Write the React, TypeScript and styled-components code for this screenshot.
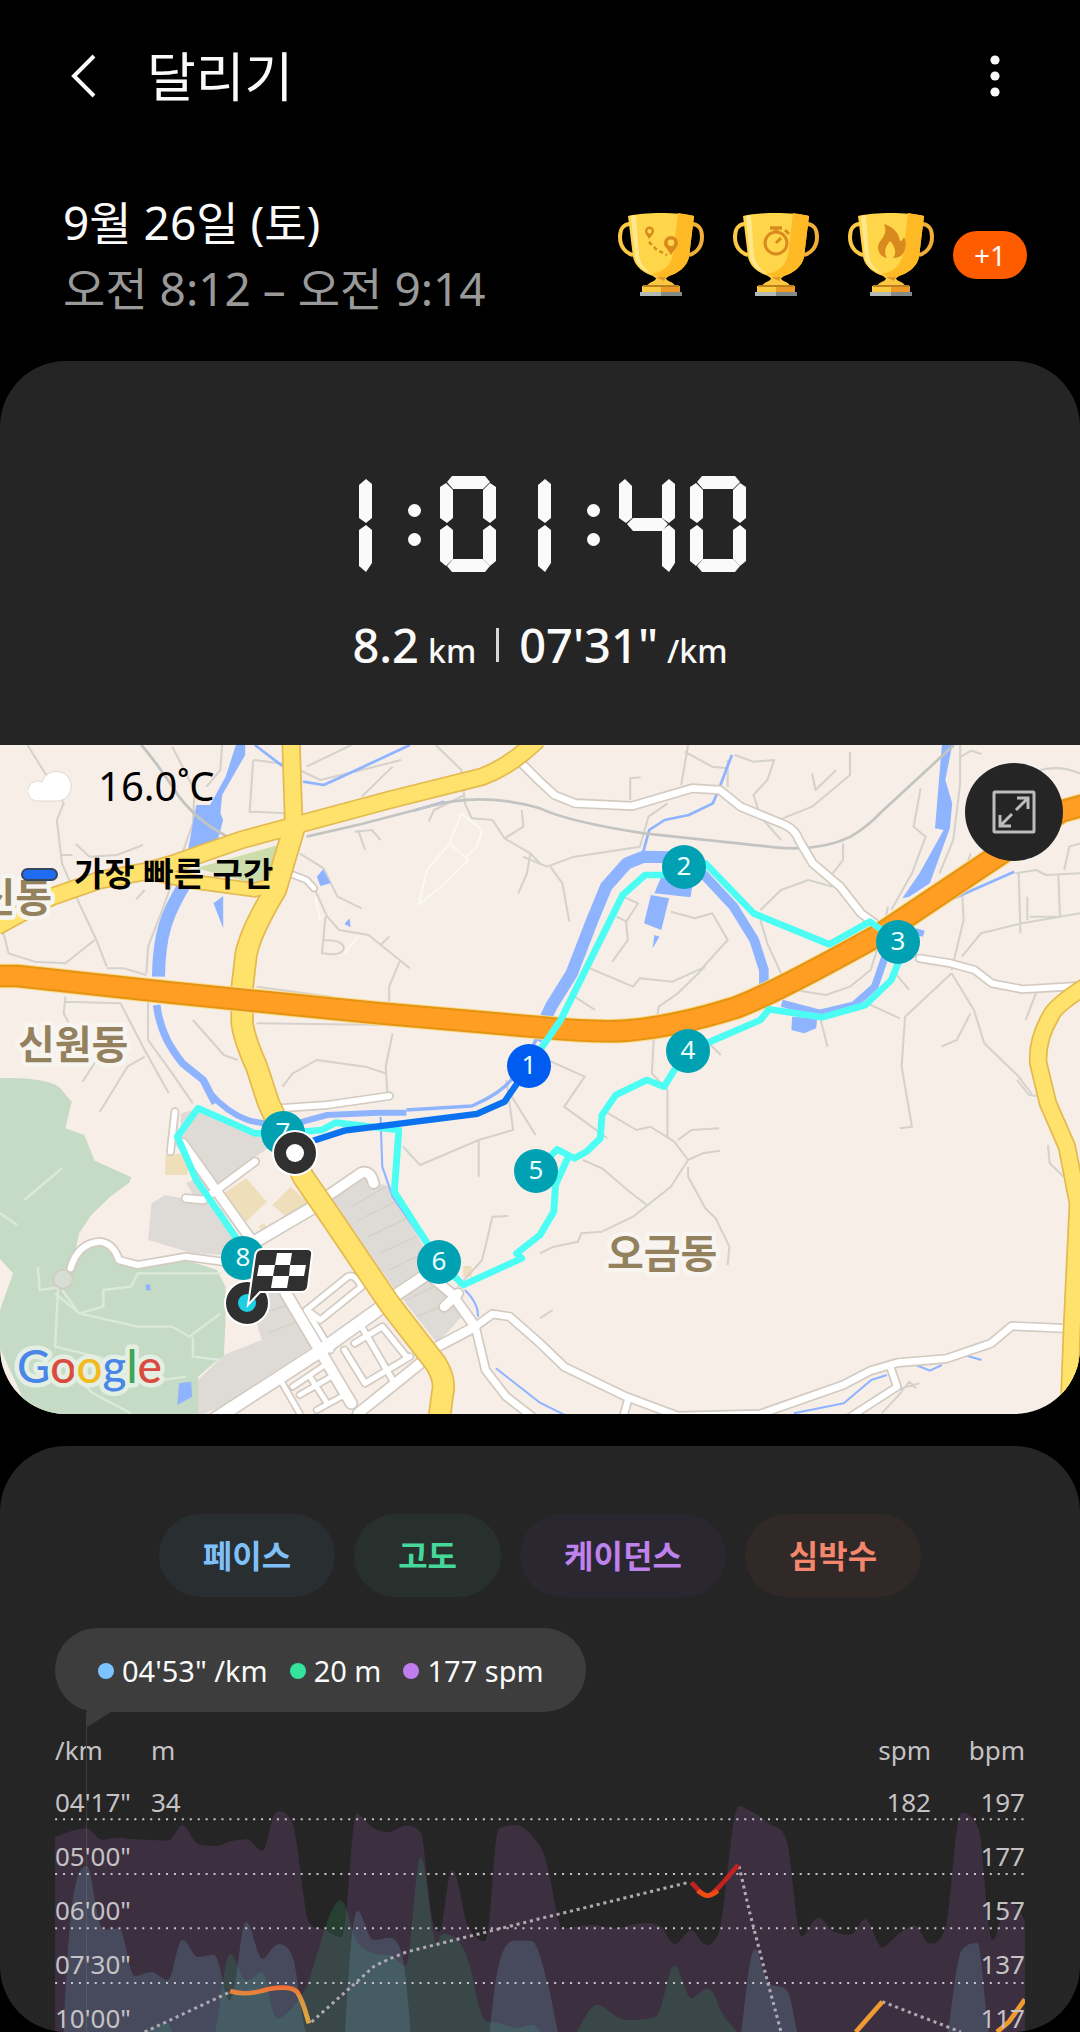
import React from "react";
import styled, { createGlobalStyle, css } from "styled-components";

const GlobalStyle = createGlobalStyle`
  *, *::before, *::after { box-sizing: border-box; }
  body {
    margin: 0;
    background: #000;
    color: #fafafa;
    font-family: "Noto Sans", "Noto Sans CJK KR", sans-serif;
  }
  button { font: inherit; color: inherit; border: 0; padding: 0; background: none; cursor: pointer; }
  h1, p { margin: 0; font-weight: 400; }
  svg { display: block; }
`;

/* ---------- header ---------- */

const Header = styled.header`
  display: flex;
  align-items: center;
  padding: 38px 58px 75px 56px;
`;

const IconButton = styled.button`
  display: grid;
  place-items: center;
  width: 54px;
  height: 74px;
`;

const Title = styled.h1`
  flex: 1;
  margin-left: 37px;
  padding-top: 2px;
  font-size: 53px;
  line-height: 74px;
`;

const Summary = styled.section`
  display: flex;
  justify-content: space-between;
  align-items: flex-start;
  padding: 0 53px 40px 63px;
`;

const DateLine = styled.p<{ $muted?: boolean }>`
  font-size: 46px;
  line-height: 66px;
  color: ${(p) => (p.$muted ? "#999" : "#fafafa")};
`;

const Awards = styled.div`
  display: flex;
  gap: 29px;
  align-items: center;
  padding-top: 24px;
`;

const MoreBadge = styled.button`
  width: 74px;
  height: 48px;
  margin: 0 0 0 -10px;
  border-radius: 24px;
  background: #ff5c00;
  font-size: 28px;
  line-height: 48px;
`;

/* ---------- timer card ---------- */

const Card = styled.section`
  border-radius: 66px;
  background: #252525;
  overflow: hidden;
`;

const Timer = styled.div`
  display: grid;
  justify-content: center;
  padding: 115px 2px 0 0;
`;

const TimerText = styled.span`
  grid-area: 1 / 1;
  justify-self: center;
  font-size: 96px;
  line-height: 96px;
  color: transparent;
`;

const TimerSegments = styled.span`
  grid-area: 1 / 1;
  display: flex;
`;

const DigitBox = styled.span<{ $narrow: boolean }>`
  display: grid;
  grid-template-columns: 56px;
  justify-content: end;
  width: ${(p) => (p.$narrow ? 40 : 56)}px;
  height: 96px;
  & + & { margin-left: 15px; }
`;

const Segment = styled.i<{ $shape: string }>`
  grid-area: 1 / 1;
  height: 96px;
  background: #fafafa;
  clip-path: polygon(${(p) => p.$shape});
`;

const ColonBox = styled.span`
  display: flex;
  flex-direction: column;
  gap: 16px;
  margin: 28px 19px 0 36px;
`;

const ColonDot = styled.i`
  width: 13px;
  height: 13px;
  border-radius: 50%;
  background: #fafafa;
`;

const Stats = styled.div`
  display: flex;
  justify-content: center;
  align-items: center;
  gap: 20px;
  padding: 43px 0 70px;
`;

const Stat = styled.p`
  display: flex;
  align-items: baseline;
  gap: 9px;
  height: 60px;
  font-size: 47px;
  line-height: 60px;
  font-weight: 500;
`;

const Unit = styled.span`
  font-size: 32px;
  line-height: 40px;
`;

const Divider = styled.i`
  width: 3px;
  height: 34px;
  background: #d8d8d8;
`;

/* ---------- map ---------- */

const MapFrame = styled.div`
  position: relative;
  background: #f7eee8;
  & > svg { width: 100%; height: auto; }
`;

const MapInfo = styled.div`
  position: absolute;
  top: 19px;
  left: 21px;
  display: flex;
  flex-direction: column;
  gap: 46px;
  color: #000;
`;

const InfoRow = styled.div<{ $gap: number; $inset?: number }>`
  display: flex;
  align-items: center;
  gap: ${(p) => p.$gap}px;
  padding-left: ${(p) => p.$inset || 0}px;
`;

const Temperature = styled.span`
  font-size: 40px;
  line-height: 44px;
`;

const Legend = styled.span`
  font-size: 33px;
  line-height: 40px;
  font-weight: 700;
`;

const Swatch = styled.i`
  width: 37px;
  height: 13px;
  border: 2px solid #33475f;
  border-radius: 7px;
  background: #1f6cf0;
`;

const ExpandButton = styled.button`
  position: absolute;
  top: 18px;
  right: 17px;
  display: grid;
  place-items: center;
  width: 98px;
  height: 98px;
  border-radius: 50%;
  background: #252525;
`;

/* ---------- chart card ---------- */

const ChartCard = styled(Card)`
  margin-top: 32px;
  padding: 68px 55px 0;
`;

const Pills = styled.div`
  display: flex;
  justify-content: center;
  gap: 19px;
`;

const Pill = styled.button<{ $bg: string; $fg: string }>`
  height: 83px;
  padding: 0 44px;
  border-radius: 42px;
  background: ${(p) => p.$bg};
  color: ${(p) => p.$fg};
  font-size: 32px;
  line-height: 83px;
  font-weight: 700;
  white-space: nowrap;
`;

const Plot = styled.div`
  position: relative;
  margin-top: 31px;
  &::before {
    content: "";
    position: absolute;
    top: 84px;
    bottom: 0;
    left: 31px;
    width: 1px;
    background: #3d3d3d;
  }
`;

const Bubble = styled.div`
  position: relative;
  display: inline-flex;
  align-items: center;
  gap: 22px;
  height: 84px;
  padding: 2px 42px 0 43px;
  border-radius: 42px;
  background: #3d3d3d;
  &::after {
    content: "";
    position: absolute;
    top: 82px;
    left: 32px;
    width: 24px;
    height: 17px;
    background: #3d3d3d;
    clip-path: polygon(0 0, 100% 0, 100% 2px, 0 100%);
  }
`;

const Reading = styled.span<{ $dot: string }>`
  display: flex;
  align-items: center;
  gap: 8px;
  font-size: 29px;
  line-height: 40px;
  white-space: nowrap;
  &::before {
    content: "";
    width: 16px;
    height: 16px;
    border-radius: 50%;
    background: ${(p) => p.$dot};
  }
`;

const AxisRow = styled.div`
  display: grid;
  grid-template-columns: 96px 1fr 1fr 94px;
  font-size: 26px;
  line-height: 36px;
  color: #c4c2c4;
  & > :nth-child(n + 3) { text-align: right; }
`;

const AxisHead = styled(AxisRow)`
  margin: 20px 0 16px;
`;

const Canvas = styled.div`
  position: relative;
  height: 248px;
  overflow: hidden;
  & > svg {
    position: absolute;
    inset: 0;
    width: 100%;
    height: 100%;
  }
`;

const AxisRows = styled.div`
  position: relative;
  display: grid;
  gap: 18px;
`;

/* ---------- seven segment display ---------- */

const SHAPES: Record<string, string> = {
  a: "7px 6px, 12px 0, 45px 0, 50px 6px, 43px 13px, 13px 13px",
  b: "43px 14px, 50px 7px, 56px 11px, 56px 42px, 50px 47px, 43px 42px",
  c: "43px 54px, 50px 49px, 56px 54px, 56px 85px, 50px 90px, 43px 83px",
  d: "7px 90px, 13px 83px, 43px 83px, 50px 90px, 45px 96px, 12px 96px",
  e: "0 54px, 7px 49px, 13px 54px, 13px 83px, 6px 90px, 0 85px",
  f: "0 11px, 6px 7px, 13px 14px, 13px 42px, 7px 47px, 0 42px",
  g: "8px 48px, 14px 42px, 43px 42px, 49px 48px, 43px 55px, 14px 55px",
  B: "43px 9px, 50px 3px, 56px 8px, 56px 42px, 50px 47px, 43px 42px",
  C: "43px 54px, 50px 49px, 56px 54px, 56px 87px, 50px 96px, 43px 90px",
  F: "0 8px, 6px 3px, 13px 10px, 13px 42px, 7px 47px, 0 42px",
};

const LIT: Record<string, string> = { "0": "abcdef", "1": "BC", "4": "FgBC" };

function SegmentClock({ value }: { value: string }) {
  return (
    <Timer role="timer">
      <TimerText>{value}</TimerText>
      <TimerSegments aria-hidden>
        {value.split("").map((ch, i) =>
          ch === ":" ? (
            <ColonBox key={i}>
              <ColonDot />
              <ColonDot />
            </ColonBox>
          ) : (
            <DigitBox key={i} $narrow={ch === "1"}>
              {LIT[ch].split("").map((s) => (
                <Segment key={s} $shape={SHAPES[s]} />
              ))}
            </DigitBox>
          )
        )}
      </TimerSegments>
    </Timer>
  );
}

/* ---------- trophies ---------- */

const EMBLEM = "#d98a1e";

function Trophy({ label, children }: { label: string; children: React.ReactNode }) {
  return (
    <svg width="86" height="83" viewBox="0 0 86 83" role="img" aria-label={label}>
      <path d="M12 11C5 11 2 17 2 24C2 33 7 40 15 42" fill="none" stroke="#fcc944" strokeWidth="4" />
      <path d="M74 11C81 11 84 17 84 24C84 33 79 40 71 42" fill="none" stroke="#f0ae3a" strokeWidth="4" />
      <path d="M10 3C26 -1 60 -1 76 3L71 44C69 54 60 60 51 63L47 66H39L35 63C26 60 17 54 15 44Z" fill="#ffd54a" />
      <path d="M60 0C66 1 72 2 76 3L71 44C69 54 60 60 51 63L44 65L33 61C48 59 55 50 56 34Z" fill="#ffb924" />
      <path d="M13 3L18 2L21 43C23 52 29 58 35 61C25 58 18 52 17 43Z" fill="#ffe78e" />
      <path d="M38 64H48C47 69 56 68 57 73H29C31 68 39 69 38 64Z" fill="#fcc740" />
      <path d="M38 64H48L46 68Z" fill="#e09a2a" />
      <path d="M24 73H43V79H24Z" fill="#fdc93f" />
      <path d="M43 73H62V79H43Z" fill="#ee9a26" />
      <path d="M25 72H61V74H25Z" fill="#b9821f" />
      <path d="M22 79H43V83H22Z" fill="#b3bab5" />
      <path d="M43 79H64V83H43Z" fill="#838b89" />
      {children}
    </svg>
  );
}

const RouteEmblem = () => (
  <g fill={EMBLEM}>
    <path fillRule="evenodd" d="M31 26C29 22 27 21 27 18A4.500 4.500 0 0 1 36 18C36 21 33 23 31 26ZM31.500 16A2.200 2.200 0 1 0 31.500 20.400A2.200 2.200 0 0 0 31.500 16Z" />
    <path fillRule="evenodd" d="M53 42C50 36 46 34 46 30A7 7 0 0 1 60 30C60 34 56 37 53 42ZM53 26.500A3.300 3.300 0 1 0 53 33.100A3.300 3.300 0 0 0 53 26.500Z" />
    <path d="M31 29L39 37L49 42" fill="none" stroke={EMBLEM} strokeWidth="2.500" strokeDasharray="4 3" />
  </g>
);

const StopwatchEmblem = () => (
  <g fill="none" stroke={EMBLEM} strokeWidth="3">
    <circle cx="43" cy="30" r="11" />
    <path d="M37 15H49" strokeWidth="3.500" />
    <path d="M43 15V20M43 30L48 25M52 17L56 21" />
  </g>
);

const FlameEmblem = () => (
  <path
    d="M36 11C46 14 51 21 52 28C54 28 55 26 56 24C58 28 58 32 57 36C56 41 52 45 45 45C49 40 47 33 42 28C38 33 35 39 39 45C33 44 30 39 30 34C30 27 41 23 36 11Z"
    fill={EMBLEM}
  />
);

/* ---------- map drawing ---------- */

const MINOR_ROADS = [
  "M80 15L125 90L185 190L165 240L180 370L230 490L280 600L310 680",
  "M220 312L260 350L340 345L415 315M180 345H210M420 450L395 478",
  "M500 20L565 150L560 250L475 500L430 620L425 700M645 15L640 90L600 140",
  "M10 580L25 640L100 665L190 670L275 600",
  "M190 770L185 820L200 850M190 785L350 790L420 930L490 1060",
  "M430 770L430 900L500 1000L560 1090M420 950L370 980L290 1115M240 1025L280 960",
  "M560 840L650 945L690 960M735 60L830 72M735 60L725 215L830 220",
  "M890 80L1020 15M870 90L930 120L1050 90L1165 60M1140 80L1090 130L1050 170",
  "M1265 15L1340 90L1350 190L1370 235L1430 240L1465 295L1540 340L1568 370",
  "M1465 295L1520 260L1515 210M1540 340L1530 400L1505 460M1245 245L1260 210L1350 165",
  "M870 340L940 385L980 470L1050 505M915 450L950 530L985 570L1070 585L1190 685M1105 615L1130 590",
  "M1160 665L1130 740V790M1140 880L1120 980L1125 1060M945 530L935 640Q1000 650 998 620Q990 600 940 600",
  "M820 1040L850 1000L920 960L1060 980L1120 1000M1040 270L1060 330M1030 275L1080 270L1105 300",
  "M310 685L360 685L425 705M745 740L960 770M745 850L1130 855",
  "M1998 15L1978 135M1988 35L2068 80L2113 85M2133 45L2188 65L2248 60L2228 120L2188 165L2208 230L2268 300",
  "M2468 35V105L2358 200L2273 235M2358 100L2368 150L2428 90M1830 180V115L1860 112M2113 60V140",
  "M1938 190L1883 230L1858 320L1668 350L1588 380L1518 350M1598 380L1633 430L1653 545",
  "M1798 465L1853 490L1818 545L1823 600L1778 665M1790 530L1820 545",
  "M1948 515L2018 535L2068 520L2113 600L2038 685L1953 725L1858 715L1838 740L1713 685",
  "M2448 310V360L2418 400M2208 510L2268 450L2348 420L2418 440",
  "M2208 540L2228 610L2268 700L2308 750L2398 765L2468 740L2528 690L2568 560L2578 500",
  "M2673 145L2653 260L2688 290L2648 400L2588 510M2788 15V130L2768 300L2728 400M2790 50L2820 32L2850 42",
  "M2818 340L2793 440L2798 540L2763 690M2958 400L2963 580M3073 405L3078 530L2990 530M2983 470V540",
  "M2948 400L3008 390L3038 405L3136 400M2793 650L2848 580L2968 550L3136 520M3020 90Q3080 75 3136 100M3090 390L3105 320L3136 310",
  "M2763 700L2628 830L2618 980L2648 1160L2613 1165M2763 700L2828 810L2858 910L2958 1010L3000 1068",
  "M2818 820L2778 900L2733 920M2518 790L2613 835M3008 760L2978 840M2383 840L2403 920M2058 910L2093 945",
  "M2048 680L1968 760L1913 800L1898 900L1893 1000L1938 1050V1190",
  "M1568 950L1698 1010L1638 1100L1698 1145L1763 1195M1668 770L1728 810M2600 700L2640 750",
  "M1758 1115L1848 1170L1888 1160L1958 1205L1998 1260L1948 1340L1838 1430L1748 1475L1688 1480L1678 1505L1608 1520L1568 1540",
  "M1968 1200L2008 1170L2088 1165M1998 1260L2040 1240L2090 1232M1998 1280V1310L2048 1405L2078 1435L2118 1520L2113 1575",
  "M1693 1260L1748 1285L1828 1355L1878 1395M3043 1215L3048 1270L3088 1310M2953 1020L2988 1065L3010 1068",
  "M1170 1220L1220 1275L1390 1200L1490 1170L1470 1020M1480 1060L1555 1185M1390 1200V1310M1330 1640L1400 1560L1430 1430L1475 1428",
  "M1568 1735L1605 1710M2600 1950L2670 1930M2560 2020L2610 1965L2640 1925L2660 1945",
];

const PARK_PATHS = [
  "M170 1620L160 1820L280 1850L380 1880L470 1920L540 1910",
  "M160 1660L230 1720L400 1760L500 1760L550 1790L640 1720",
  "M640 1600L400 1600L380 1640L300 1650V1700L230 1720L180 1650",
  "M560 1790V1850L640 1860M110 1580L115 1650L190 1640",
  "M70 1380L180 1285M0 1420L50 1455M165 1850L270 1960L380 2020",
];

const WHITE_ROADS: Array<[string, number]> = [
  ["M1510 65L1568 125L1610 165L1670 190L1835 198L2010 145L2090 150L2150 200L2280 255Q2310 270 2320 300L2360 370L2440 440L2500 520L2540 550", 20],
  ["M2670 655L2760 670L2830 690L2880 730L2970 748L3130 738", 18],
  ["M840 400L890 420L912 445", 14],
  ["M810 1105L950 1095L1130 1068", 18],
  ["M508 1115L495 1235", 16],
  ["M205 1585Q225 1510 290 1505Q330 1510 345 1560L400 1575L540 1550L680 1570", 18],
  ["M540 1375L590 1380L740 1265", 20],
  ["M530 1210L730 1500", 26],
  ["M740 1505L905 1405", 34],
  ["M955 1365L1050 1298Q1075 1290 1085 1330", 28],
  ["M620 2040L920 1840L1110 1700", 36],
  ["M830 1660L1020 1990", 30],
  ["M1150 1665L1230 1610", 32],
  ["M1040 2020L1220 1870", 28],
  ["M1240 1600L1310 1660L1380 1760L1270 1820M1290 1700L1330 1660", 26],
  ["M1380 1760L1430 1722L1480 1730L1568 1810L1638 1880L1818 1970L1968 2028L2208 2022L2448 1935L2528 1892L2608 1868L2748 1856L2878 1810L2938 1758L3088 1765", 20],
  ["M1380 1760L1410 1890L1470 1970L1545 2030", 20],
  ["M2585 1880L2605 1940L2470 2030", 18],
  ["M1825 1975L1810 2030", 18],
  ["M890 1710L1010 1610Q1030 1600 1050 1640L930 1740ZM890 1710L960 1830", 16],
  ["M1050 1760L1140 1920M1000 1830L1060 1930L1190 1850M1030 1810L1110 1760L1180 1850", 16],
  ["M820 1930L870 2020M850 1940L950 1870L1010 1960L920 2010M900 1910L950 1990M870 1965L970 1905", 14],
];

const YELLOW_ROADS: Array<[string, number]> = [
  ["M845 0L853 260", 46],
  ["M-10 560L150 470L290 420L420 395L500 372L700 300L860 255L1130 180L1400 110Q1480 80 1560 0", 46],
  ["M420 395L560 425L740 450L810 430", 36],
  ["M855 260L800 450Q730 570 715 640L703 745V850Q710 900 745 980L780 1090L880 1310L960 1430L1130 1690L1265 1870Q1295 1920 1285 1960L1275 2040", 58],
  ["M3150 740Q3060 800 3050 830Q3010 900 3015 970L3043 1090L3098 1220L3130 1390L3113 1760L3103 2040", 44],
];

const HIGHWAY =
  "M-10 708H50L500 758L1100 820L1568 862Q1730 878 1820 872Q1960 860 2130 805Q2230 770 2560 580L2900 345L3080 215L3150 195";

const ROUTE =
  "M1537 977L1628 840L1808 465L1873 405H1923L1987 380L2048 370L2188 520L2408 613L2526 545L2608 605V670L2588 720L2513 795L2388 832L2233 808L2208 840L2063 905L1998 933L1958 990L1928 1040L1878 1020L1788 1065L1748 1125L1743 1195L1703 1235L1668 1255L1618 1228L1557 1293M1648 1255L1613 1335L1608 1415L1568 1485L1500 1540L1515 1555L1345 1635L1275 1565L1145 1355L1158 1170L975 1148L935 1170L823 1180H740L575 1105L515 1190L570 1320L690 1500L710 1600";

const MARKERS: Array<[string, number, number]> = [
  ["2", 684, 867],
  ["3", 898, 942],
  ["4", 688, 1051],
  ["5", 536, 1171],
  ["6", 439, 1262],
  ["7", 283, 1133],
  ["8", 243, 1258],
  ["1", 529, 1066],
];

const MapText = styled.text<{ $size: number; $weight?: number }>`
  font-family: "Noto Sans", "Noto Sans CJK KR", sans-serif;
  font-size: ${(p) => p.$size}px;
  font-weight: ${(p) => p.$weight || 400};
`;

const haloed = css`
  paint-order: stroke;
  stroke-linejoin: round;
`;

const PlaceName = styled(MapText)`
  fill: #94825f;
  stroke: #f8f5f1;
  stroke-width: 9px;
  ${haloed}
`;

const MapBrand = styled.text`
  font-family: Lato, sans-serif;
  font-size: 46px;
  font-weight: 500;
  stroke: #e4efe3;
  stroke-width: 9px;
  ${haloed}
`;

function RouteMap() {
  return (
    <svg viewBox="0 745 1080 669" role="img" aria-label="달리기 경로 지도">
      <g transform="translate(0 740) scale(.34439 .33333)" fill="none" strokeLinejoin="round">
        <path fill="#c5dbc5" d="M0 1015C60 1012 150 1018 175 1045L208 1085L190 1165L245 1185L275 1262L382 1312L375 1328L320 1370L265 1425L230 1480L215 1550L290 1505L340 1560L400 1585L540 1560L630 1590L655 1640V1740L650 1850L620 1870L575 1910L580 2030H60V1960L0 1825V1710L38 1600L0 1557Z" />
        <path fill="#dedbd6" d="M525 1120L570 1108L740 1180L790 1215L630 1335L525 1190ZM440 1390L480 1365L600 1390L645 1410L690 1500L650 1545L560 1540L430 1500ZM720 1620L830 1660L915 1815L640 2000L575 2030V1920L650 1845L760 1800L740 1730ZM960 1375L1050 1310L1130 1340L1345 1725L1270 1810L1140 1640ZM540 1330L580 1310L620 1360L570 1380Z" />
        <path fill="#eedfba" d="M480 1245L545 1240V1305H480ZM650 1360L715 1315L775 1385L715 1445ZM790 1395L845 1340L900 1395L830 1430ZM1345 1578H1370V1610H1345ZM750 1460L765 1450L780 1470L765 1480Z" />
        <path stroke="#dbe9db" strokeWidth="7" d={PARK_PATHS.join("")} />
        <circle cx="183" cy="1618" r="28" fill="#d6ded3" stroke="#d3cbc1" strokeWidth="5" />
        <path stroke="#d5d2cb" strokeWidth="6" d={MINOR_ROADS.join("")} />
        <path stroke="#fcf8f4" strokeWidth="6" d="M1340 220L1305 310L1360 360L1280 440L1215 495M1340 220L1400 270L1385 320L1355 350M1305 310L1240 390L1215 495M915 470L930 540M1040 590L1000 640" />
        <path stroke="#cbc6be" strokeWidth="4" d="M1020 1400L1120 1340M1040 1440L1160 1380M1070 1490L1190 1430M1100 1540L1210 1490M1130 1590L1230 1540M1180 1680L1280 1630M1210 1730L1300 1690M760 1720L850 1690M780 1780L870 1740" opacity=".5" />
        <g fill="#8fb4ff">
          <path d="M685 15H712V45L645 165L640 220L648 240L630 310L545 335L570 195H610L655 110Z" />
          <path d="M938 388L960 430L930 438L920 410ZM1015 535L1018 562L1000 552ZM648 468V565L620 490ZM520 1930L555 1925L558 1970L515 1995ZM422 1635L435 1632L438 1652L424 1650Z" />
          <path d="M1920 410L2010 440L2005 472L1900 460ZM1890 465L1943 475L1920 570L1870 550ZM1900 585L1915 590L1895 625ZM2300 830L2373 835L2370 865L2335 880L2298 870Z" />
          <path d="M2735 15H2765L2745 120L2765 190L2758 265L2700 430L2640 470L2620 475L2670 400L2740 270L2715 265ZM2660 565L2685 572L2680 590L2655 585Z" />
        </g>
        <g stroke="#8fb4ff">
          <path strokeWidth="38" d="M535 435C485 520 462 580 460 710" />
          <path strokeWidth="22" d="M455 795C465 880 500 930 530 970L590 1020L625 1090" />
          <path strokeWidth="18" d="M610 1060C680 1140 740 1160 860 1150L950 1125L1100 1118H1180" />
          <path strokeWidth="10" d="M1180 1110L1370 1098C1430 1070 1500 1040 1560 890" />
          <path strokeWidth="36" d="M1555 900L1600 800L1660 700L1720 540L1760 440L1820 370L1870 350L1950 352" />
          <path strokeWidth="28" d="M2040 400L2130 500L2190 600L2218 690V745" />
          <path strokeWidth="22" d="M2270 790L2380 820L2480 795L2540 740L2570 650" />
          <path strokeWidth="8" d="M2125 45L2090 140L2070 190L2000 225L1930 240L1885 270L1868 335M740 15L820 78M880 125L940 135L1060 78L1190 15M2675 518L2945 395M1200 212L1290 185" />
          <path strokeWidth="6" d="M1105 1130L1110 1280L1140 1370L1240 1520M1350 1650Q1390 1690 1388 1730M2305 2020L2450 1990L2530 1920L2575 1905M1440 1885L1568 1988L1640 2025M2660 1875L2700 1892L2735 1875M2810 1848L2850 1860" />
        </g>
        <path stroke="#c3c4c1" strokeWidth="8" d="M410 15Q450 60 520 170Q580 250 665 292M890 290L1050 252L1250 198Q1400 155 1568 205Q1650 245 1870 280L2250 322Q2380 335 2470 290Q2520 260 2560 215L2770 15" />
        {WHITE_ROADS.map(([d, w]) => (
          <path key={d} d={d} stroke="#d3cbc1" strokeWidth={w + 10} strokeLinecap="round" />
        ))}
        {WHITE_ROADS.map(([d, w]) => (
          <path key={d} d={d} stroke="#fff" strokeWidth={w} strokeLinecap="round" />
        ))}
        <path fill="#cddcab" d="M570 385L825 310L795 420L735 430Z" />
        {YELLOW_ROADS.map(([d, w]) => (
          <path key={d} d={d} stroke="#e4b94f" strokeWidth={w + 10} />
        ))}
        {YELLOW_ROADS.map(([d, w]) => (
          <path key={d} d={d} stroke="#ffe26c" strokeWidth={w} />
        ))}
        <path d={HIGHWAY} stroke="#fbd98a" strokeWidth="74" />
        <path d={HIGHWAY} stroke="#e39412" strokeWidth="68" />
        <path d={HIGHWAY} stroke="#ff9e22" strokeWidth="56" />
      </g>

      <PlaceName $size={40} $weight={700} x="52" y="912" textAnchor="end">신동</PlaceName>
      <PlaceName $size={40} $weight={700} x="18" y="1059">신원동</PlaceName>
      <PlaceName $size={40} $weight={700} x="607" y="1268">오금동</PlaceName>

      <g transform="translate(0 740) scale(.34439 .33333)" fill="none">
        <path d={ROUTE} stroke="#4cfdf3" strokeWidth="20" strokeLinejoin="round" />
        <path d="M880 1212L1000 1172L1385 1122L1465 1085L1537 977" stroke="#0a72ee" strokeWidth="19" />
      </g>

      {MARKERS.map(([n, x, y]) => (
        <g key={n}>
          <circle cx={x} cy={y} r="22" fill={n === "1" ? "#005cf0" : "#00a1b2"} />
          <MapText $size={26} x={x} y={y + 8} textAnchor="middle" fill="#eaffff">{n}</MapText>
        </g>
      ))}

      <circle cx="295" cy="1153" r="22" fill="#303030" stroke="#fff" strokeWidth="2" />
      <circle cx="295" cy="1153" r="9" fill="#fff" />
      <circle cx="247" cy="1303" r="22" fill="#303030" stroke="#fff" strokeWidth="2" />
      <circle cx="247" cy="1303" r="9" fill="#1ccfe3" />
      <path d="M262 1249H307Q313 1249 312 1255L308 1287Q307 1292 301 1292H260L248 1305L255 1256Q256 1249 262 1249Z" fill="#303030" stroke="#fff" strokeWidth="2" />
      <path d="M277 1253H292L290 1265H306L304 1276H289L287 1288H271L273 1276H257L259 1265H275Z" fill="#fff" />
      <path d="M275 1265H290L289 1276H273Z" fill="#303030" />

      <MapBrand x="17" y="1383">
        <tspan fill="#4a86e8">G</tspan>
        <tspan fill="#db4a3e">o</tspan>
        <tspan fill="#f3b91f">o</tspan>
        <tspan fill="#4a86e8">g</tspan>
        <tspan fill="#3fa558">l</tspan>
        <tspan fill="#db4a3e">e</tspan>
      </MapBrand>
    </svg>
  );
}

/* ---------- chart drawing ---------- */

const CADENCE =
  "M160 322C190 308 225 296 250 295C268 296 278 328 298 330C320 328 335 322 355 324C400 330 450 330 487 332C505 330 515 286 530 286C545 286 560 340 580 344C600 348 620 348 630 348C650 345 660 334 675 332L715 327C735 330 745 362 762 362C780 355 785 243 808 243C835 243 848 270 855 300C870 380 878 500 893 565C905 605 925 590 945 600C965 612 975 622 992 621C1010 610 1020 250 1036 250C1050 252 1070 290 1090 298C1110 306 1125 308 1135 306C1150 300 1160 290 1175 288C1200 286 1215 292 1225 315C1235 370 1245 520 1258 580C1262 605 1270 607 1277 603C1290 590 1298 420 1314 420C1332 425 1340 540 1358 585C1372 620 1395 634 1408 634C1428 625 1432 300 1450 295C1470 284 1500 284 1512 288C1535 300 1550 325 1568 348C1600 400 1610 560 1632 598C1660 590 1700 584 1735 586C1760 592 1780 598 1798 594C1830 585 1860 576 1890 580C1910 584 1925 590 1928 600C1940 625 1952 642 1960 642C1975 640 1995 600 2006 600C2020 600 2035 645 2055 645C2075 640 2085 615 2092 590C2110 500 2125 228 2146 228C2160 228 2180 245 2195 252C2215 265 2235 285 2255 292C2275 298 2288 330 2293 380C2305 480 2315 619 2328 620C2345 615 2360 563 2376 563C2395 563 2405 600 2425 607C2445 614 2460 616 2472 613C2490 605 2498 567 2513 567C2530 570 2545 651 2562 652C2580 648 2600 615 2625 600C2640 590 2650 586 2655 587C2675 592 2682 641 2702 641C2720 641 2740 630 2750 570C2765 480 2775 249 2792 249C2815 247 2835 270 2845 310C2860 420 2868 630 2883 630C2900 628 2905 518 2930 515C2950 518 2965 545 2976 575V906H160Z";

const PACE =
  "M185 906C190 760 200 600 208 540C218 450 230 408 252 408C268 410 275 560 298 598C315 602 335 590 350 600C365 620 375 738 392 738C410 738 420 726 438 726C455 726 470 750 487 750C505 745 512 630 530 630C545 630 558 678 575 681C590 681 605 674 622 675C640 680 650 812 668 812C688 800 698 576 714 576C732 576 745 686 762 687C775 686 790 643 810 642C835 642 848 670 855 700C868 770 875 860 888 906ZM1002 906C1010 790 1020 543 1038 543C1055 543 1065 625 1085 630C1105 630 1120 622 1135 623C1165 630 1175 700 1180 760C1185 820 1190 870 1192 906ZM1422 906C1435 780 1445 640 1490 632C1515 630 1530 632 1548 634C1562 650 1575 700 1590 760C1605 820 1612 870 1620 906ZM2152 906C2165 820 2175 657 2193 657C2205 657 2215 750 2240 765C2255 770 2270 765 2282 778C2300 800 2305 870 2315 906ZM2752 906C2765 830 2775 700 2790 665C2800 645 2820 638 2840 640C2850 660 2860 840 2872 906Z";

const ALTITUDE =
  "M420 906C440 895 460 880 485 878C495 880 498 895 500 906ZM625 906C640 850 650 672 670 672C685 675 700 750 716 752C735 750 745 726 762 728C780 735 785 866 806 866C830 864 870 810 890 770C920 700 955 510 990 510C1010 520 1020 610 1040 640C1060 670 1100 676 1130 675C1150 682 1165 708 1178 708C1195 700 1205 382 1222 382C1240 390 1250 640 1270 640C1275 635 1272 612 1290 612C1320 610 1345 640 1362 700C1380 760 1390 870 1415 874C1440 880 1450 877 1490 893C1510 895 1530 885 1550 884C1560 890 1565 900 1568 906ZM1675 906C1700 860 1715 824 1735 824C1760 828 1785 868 1820 870C1860 870 1895 868 1910 855C1930 820 1940 706 1960 706C1975 708 1990 800 2008 805C2025 802 2040 775 2055 775C2075 780 2085 830 2100 855C2115 880 2130 890 2140 906Z";

function ChartDrawing() {
  return (
    <svg viewBox="55 1784 970 248" preserveAspectRatio="none" role="img" aria-label="구간별 그래프">
      <defs>
        <linearGradient id="warm" gradientUnits="userSpaceOnUse" x1="0" y1="770" x2="0" y2="880">
          <stop offset="0" stopColor="#f06e35" />
          <stop offset=".3" stopColor="#dd9440" />
          <stop offset="1" stopColor="#dca740" />
        </linearGradient>
      </defs>
      <g transform="translate(0 1730) scale(.34439 .33333)">
        <path d={CADENCE} fill="rgb(197 110 224 / .15)" />
        <path d={ALTITUDE} fill="rgb(52 172 112 / .2)" />
        <path d={PACE} fill="rgb(116 178 210 / .2)" />
        <path d="M160 268H2976M160 432H2976M160 595H2976M160 759H2976" fill="none" stroke="#c6c3c8" strokeWidth="6" strokeDasharray="6 17" />
        <g fill="none" strokeWidth="9">
          <path d="M420 906L668 786M905 876L1085 710Q1120 690 1180 666L1568 566L2000 457M2146 408L2175 540L2225 740L2268 906M2562 815L2790 906" stroke="#b0a9b2" strokeDasharray="9 11" />
          <g strokeWidth="14">
            <path d="M668 783C700 795 740 790 780 777C820 770 850 772 862 785C880 810 888 850 897 880" stroke="url(#warm)" />
            <path d="M2008 457C2030 485 2045 497 2055 497C2080 490 2120 430 2144 405" stroke="#c0231f" />
            <path d="M2026 482Q2045 497 2055 497Q2068 496 2084 482" stroke="#f04c12" />
            <path d="M2485 906L2562 815M2895 906L2930 875L2976 808" stroke="#f09a32" />
          </g>
        </g>
      </g>
    </svg>
  );
}

/* ---------- page ---------- */

const PILLS = [
  { label: "페이스", bg: "#292e31", fg: "#80c0f8" },
  { label: "고도", bg: "#27302d", fg: "#46d89a" },
  { label: "케이던스", bg: "#2b2731", fg: "#be82ec" },
  { label: "심박수", bg: "#302928", fg: "#f4866c" },
];

const AXIS = [
  ["04'17\"", "34", "182", "197"],
  ["05'00\"", "", "", "177"],
  ["06'00\"", "", "", "157"],
  ["07'30\"", "", "", "137"],
  ["10'00\"", "", "", "117"],
];

export default function App() {
  return (
    <main>
      <GlobalStyle />
      <Header>
        <IconButton aria-label="뒤로">
          <svg width="28" height="46" viewBox="0 0 28 46">
            <path d="M25 3L5 23L25 43" fill="none" stroke="#fafafa" strokeWidth="4" />
          </svg>
        </IconButton>
        <Title>달리기</Title>
        <IconButton aria-label="더보기">
          <svg width="10" height="42" viewBox="0 0 10 42" fill="#fafafa">
            <circle cx="5" cy="5" r="4.600" />
            <circle cx="5" cy="21" r="4.600" />
            <circle cx="5" cy="37" r="4.600" />
          </svg>
        </IconButton>
      </Header>

      <Summary>
        <div>
          <DateLine>9월 26일 (토)</DateLine>
          <DateLine $muted>오전 8:12 – 오전 9:14</DateLine>
        </div>
        <Awards>
          <Trophy label="최장 거리"><RouteEmblem /></Trophy>
          <Trophy label="최장 시간"><StopwatchEmblem /></Trophy>
          <Trophy label="최다 칼로리"><FlameEmblem /></Trophy>
          <MoreBadge>+1</MoreBadge>
        </Awards>
      </Summary>

      <Card>
        <SegmentClock value="1:01:40" />
        <Stats>
          <Stat>8.2<Unit>km</Unit></Stat>
          <Divider />
          <Stat>07'31"<Unit>/km</Unit></Stat>
        </Stats>
        <MapFrame>
          <RouteMap />
          <MapInfo>
            <InfoRow $gap={24} $inset={7}>
              <svg width="46" height="32" viewBox="0 0 46 32">
                <path d="M11 31A10 10 0 1 1 14 12A15 15 0 1 1 31 31Z" fill="#fff" stroke="#ddd8d3" />
              </svg>
              <Temperature>16.0˚C</Temperature>
            </InfoRow>
            <InfoRow $gap={16}>
              <Swatch />
              <Legend>가장 빠른 구간</Legend>
            </InfoRow>
          </MapInfo>
          <ExpandButton aria-label="지도 확대">
            <svg width="44" height="44" viewBox="0 0 44 44" fill="none" stroke="#bdbdbd" strokeWidth="3">
              <rect x="2" y="2" width="40" height="40" rx="1" />
              <path d="M25 8H36V19M36 8L24 20M8 25V36H19M8 36L20 24" />
            </svg>
          </ExpandButton>
        </MapFrame>
      </Card>

      <ChartCard>
        <Pills>
          {PILLS.map((p) => (
            <Pill key={p.label} $bg={p.bg} $fg={p.fg}>{p.label}</Pill>
          ))}
        </Pills>
        <Plot>
          <Bubble>
            <Reading $dot="#7cc4ff">04'53" /km</Reading>
            <Reading $dot="#35e39c">20 m</Reading>
            <Reading $dot="#c17df0">177 spm</Reading>
          </Bubble>
          <AxisHead>
            <span>/km</span>
            <span>m</span>
            <span>spm</span>
            <span>bpm</span>
          </AxisHead>
          <Canvas>
            <ChartDrawing />
            <AxisRows>
              {AXIS.map((row) => (
                <AxisRow key={row[0]}>
                  {row.map((v, i) => (
                    <span key={i}>{v}</span>
                  ))}
                </AxisRow>
              ))}
            </AxisRows>
          </Canvas>
        </Plot>
      </ChartCard>
    </main>
  );
}
